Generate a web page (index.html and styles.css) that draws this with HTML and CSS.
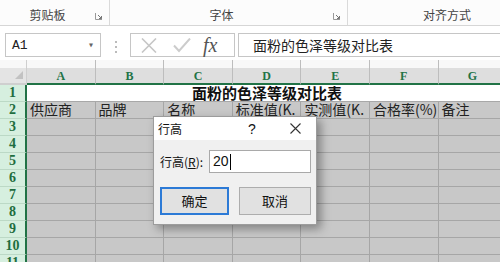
FILE: index.html
```html
<!DOCTYPE html>
<html>
<head>
<meta charset="UTF-8">
<title>行高</title>
<link rel="stylesheet" href="styles.css">
</head>
<body>
<div class="ribbon">
    <div class="group">
        <span class="group-label">剪贴板</span>
        <svg class="launcher" width="8" height="8" viewBox="0 0 8 8"><path d="M0.5 1v6.5H7" fill="none" stroke="#999"/><path d="M3 3l3.5 3.5M6.5 4v2.5H4" fill="none" stroke="#777"/></svg>
    </div>
    <div class="group">
        <span class="group-label">字体</span>
        <svg class="launcher" width="8" height="8" viewBox="0 0 8 8"><path d="M0.5 1v6.5H7" fill="none" stroke="#999"/><path d="M3 3l3.5 3.5M6.5 4v2.5H4" fill="none" stroke="#777"/></svg>
    </div>
    <div class="group group-align">
        <span class="group-label">对齐方式</span>
    </div>
</div>

<div class="fbar">
    <div class="namebox">
        <span>A1</span>
        <span class="drop">&#9662;</span>
    </div>
    <div class="dots"><i></i><i></i><i></i></div>
    <div class="fbtns">
        <svg width="16" height="15" viewBox="0 0 16 15"><path d="M1 0.5l14 14M15 0.5l-14 14" stroke="#c6c6c6" stroke-width="1.6"/></svg>
        <svg width="18" height="15" viewBox="0 0 18 15"><path d="M1 7.5l5 5.5 11-12.5" fill="none" stroke="#cccccc" stroke-width="2"/></svg>
        <span class="fx">fx</span>
    </div>
    <div class="finput">面粉的色泽等级对比表</div>
</div>

<div class="sheet">
    <div class="row row-head">
        <div class="corner"><i></i></div>
        <div class="ch">A</div>
        <div class="ch">B</div>
        <div class="ch">C</div>
        <div class="ch">D</div>
        <div class="ch">E</div>
        <div class="ch">F</div>
        <div class="ch">G</div>
    </div>
    <div class="row">
        <div class="rh">1</div>
        <div class="title-cell">面粉的色泽等级对比表</div>
    </div>
    <div class="row">
        <div class="rh">2</div>
        <div class="c">供应商</div>
        <div class="c">品牌</div>
        <div class="c">名称</div>
        <div class="c">标准值(K.</div>
        <div class="c">实测值(K.</div>
        <div class="c">合格率(%)</div>
        <div class="c">备注</div>
    </div>
    <div class="row"><div class="rh">3</div><div class="c"></div><div class="c"></div><div class="c"></div><div class="c"></div><div class="c"></div><div class="c"></div><div class="c"></div></div>
    <div class="row"><div class="rh">4</div><div class="c"></div><div class="c"></div><div class="c"></div><div class="c"></div><div class="c"></div><div class="c"></div><div class="c"></div></div>
    <div class="row"><div class="rh">5</div><div class="c"></div><div class="c"></div><div class="c"></div><div class="c"></div><div class="c"></div><div class="c"></div><div class="c"></div></div>
    <div class="row"><div class="rh">6</div><div class="c"></div><div class="c"></div><div class="c"></div><div class="c"></div><div class="c"></div><div class="c"></div><div class="c"></div></div>
    <div class="row"><div class="rh">7</div><div class="c"></div><div class="c"></div><div class="c"></div><div class="c"></div><div class="c"></div><div class="c"></div><div class="c"></div></div>
    <div class="row"><div class="rh">8</div><div class="c"></div><div class="c"></div><div class="c"></div><div class="c"></div><div class="c"></div><div class="c"></div><div class="c"></div></div>
    <div class="row"><div class="rh">9</div><div class="c"></div><div class="c"></div><div class="c"></div><div class="c"></div><div class="c"></div><div class="c"></div><div class="c"></div></div>
    <div class="row"><div class="rh">10</div><div class="c"></div><div class="c"></div><div class="c"></div><div class="c"></div><div class="c"></div><div class="c"></div><div class="c"></div></div>
    <div class="row"><div class="rh">11</div><div class="c"></div><div class="c"></div><div class="c"></div><div class="c"></div><div class="c"></div><div class="c"></div><div class="c"></div></div>
</div>

<div class="dialog">
    <div class="dlg-title">
        <span class="dlg-name">行高</span>
        <span class="dlg-help">?</span>
        <svg class="dlg-close" width="11" height="11" viewBox="0 0 11 11"><path d="M0.5 0.5l10 10M10.5 0.5l-10 10" stroke="#333" stroke-width="1.1"/></svg>
    </div>
    <div class="dlg-body">
        <div class="dlg-field">
            <label class="dlg-label">行高(<u>R</u>):</label>
            <div class="dlg-input">20<span class="caret"></span></div>
        </div>
        <div class="dlg-buttons">
            <div class="btn btn-ok">确定</div>
            <div class="btn btn-cancel">取消</div>
        </div>
    </div>
</div>
</body>
</html>
```
FILE: styles.css
```css
body {
    margin: 0;
    width: 500px;
    height: 262px;
    overflow: hidden;
    background-color: #FFFFFF;
    font-family: "Noto Sans CJK SC", sans-serif;
    position: relative;
}

/* ribbon group labels */
.ribbon {
    display: grid;
    grid-template-columns: 110px 238px 1fr;
    height: 25px;
    border-bottom: 1px solid #D6D6D6;
    background-color: #FCFCFC;
}

.group {
    display: grid;
    grid-template-columns: 1fr 14px;
    align-items: center;
    border-right: 1px solid #DADADA;
    padding-top: 4px;
    box-sizing: border-box;
}

.group-align {
    border-right: none;
    padding-left: 60px;
}

.group-label {
    text-align: center;
    font-size: 12px;
    line-height: 18px;
    color: #444444;
}

.launcher {
    margin-top: 3px;
}

/* formula bar */
.fbar {
    display: flex;
    height: 34px;
    padding: 7px 0 0 5px;
    box-sizing: border-box;
}

.namebox {
    width: 96px;
    height: 24px;
    border: 1px solid #C6C6C6;
    box-sizing: border-box;
    display: flex;
    justify-content: space-between;
    align-items: center;
    padding: 0 6px 0 6px;
    font-family: "Liberation Mono", monospace;
    font-size: 13px;
    color: #222222;
}

.drop {
    font-size: 10px;
    color: #666666;
}

.dots {
    width: 29px;
    display: flex;
    flex-direction: column;
    align-items: center;
    justify-content: center;
    gap: 3px;
}

.dots i {
    width: 2px;
    height: 2px;
    background-color: #BBBBBB;
}

.fbtns {
    width: 105px;
    height: 24px;
    border: 1px solid #C6C6C6;
    box-sizing: border-box;
    display: flex;
    align-items: center;
    gap: 16px;
    padding-left: 10px;
}

.fx {
    font-family: "Liberation Serif", serif;
    font-style: italic;
    font-size: 20px;
    color: #555555;
    line-height: 20px;
    margin-left: -4px;
}

.finput {
    flex: 1;
    height: 24px;
    margin-left: 3px;
    border: 1px solid #C6C6C6;
    border-right: none;
    box-sizing: border-box;
    padding-left: 14px;
    font-size: 14px;
    line-height: 22px;
    color: #222222;
}

/* sheet grid */
.row {
    display: grid;
    grid-template-columns: 27px repeat(7, 68.6px);
    height: 17px;
}

.row-head {
    height: 25px;
}

.corner {
    background: linear-gradient(#F8F8F8 0 8px, #E4E4E4 8px);
    border-right: 1px solid #CFCFCF;
    border-bottom: 2px solid #CFCFCF;
    display: flex;
    justify-content: flex-end;
    align-items: flex-end;
    padding: 0 3px 4px 0;
}

.corner i {
    width: 0;
    height: 0;
    border-left: 8px solid transparent;
    border-bottom: 8px solid #C2C2C2;
}

.ch {
    background: linear-gradient(#F8F8F8 0 8px, #DEDEDE 8px);
    border-right: 1px solid #BDBDBD;
    border-bottom: 2px solid #217346;
    padding-top: 9px;
    text-align: center;
    font-family: "Liberation Serif", serif;
    font-weight: bold;
    font-size: 12px;
    line-height: 14px;
    color: #217346;
}

.rh {
    background-color: #D6EFDF;
    border-right: 2px solid #217346;
    border-bottom: 1px solid #BCD9C6;
    text-align: center;
    font-family: "Liberation Serif", serif;
    font-weight: bold;
    font-size: 14px;
    line-height: 16px;
    color: #1F6E40;
}

.title-cell {
    grid-column: span 7;
    background-color: #FFFFFF;
    border-bottom: 1px solid #A8A8A8;
    text-align: center;
    font-weight: bold;
    font-size: 15px;
    line-height: 16px;
    color: #111111;
}

.c {
    background-color: #C8C8C8;
    border-right: 1px solid #A6A6A6;
    border-bottom: 1px solid #A6A6A6;
    padding-left: 3px;
    overflow: hidden;
    white-space: nowrap;
    font-size: 14px;
    line-height: 14px;
    color: #222222;
}

/* row height dialog */
.dialog {
    position: absolute;
    left: 153px;
    top: 116px;
    width: 164px;
    border: 1px solid #9C9C9C;
    box-sizing: border-box;
    box-shadow: 4px 4px 9px rgba(0, 0, 0, 0.35);
}

.dlg-title {
    display: flex;
    align-items: center;
    height: 23px;
    background-color: #FFFFFF;
    padding-left: 4px;
    font-size: 12px;
    color: #111111;
}

.dlg-help {
    margin-left: 66px;
    font-family: "Liberation Sans", sans-serif;
    font-size: 14px;
}

.dlg-close {
    margin-left: 34px;
}

.dlg-body {
    background-color: #F0F0F0;
    padding: 10px 5px 9px 6px;
}

.dlg-field {
    display: flex;
    align-items: center;
}

.dlg-label {
    width: 49px;
    font-size: 12px;
    color: #111111;
}

.dlg-input {
    width: 102px;
    height: 23px;
    border: 1px solid #A9A9A9;
    box-sizing: border-box;
    background-color: #FFFFFF;
    padding-left: 3px;
    font-family: "Liberation Sans", sans-serif;
    font-size: 14px;
    line-height: 21px;
    color: #111111;
    display: flex;
    align-items: center;
}

.caret {
    width: 1px;
    height: 16px;
    margin-left: 1px;
    background-color: #000000;
}

.dlg-buttons {
    display: flex;
    gap: 10px;
    margin-top: 14px;
}

.btn {
    height: 28px;
    box-sizing: border-box;
    background-color: #E1E1E1;
    text-align: center;
    font-size: 13px;
    color: #111111;
}

.btn-ok {
    width: 69px;
    border: 2px solid #2C7AD6;
    line-height: 24px;
}

.btn-cancel {
    width: 72px;
    border: 1px solid #ADADAD;
    line-height: 26px;
}
```
